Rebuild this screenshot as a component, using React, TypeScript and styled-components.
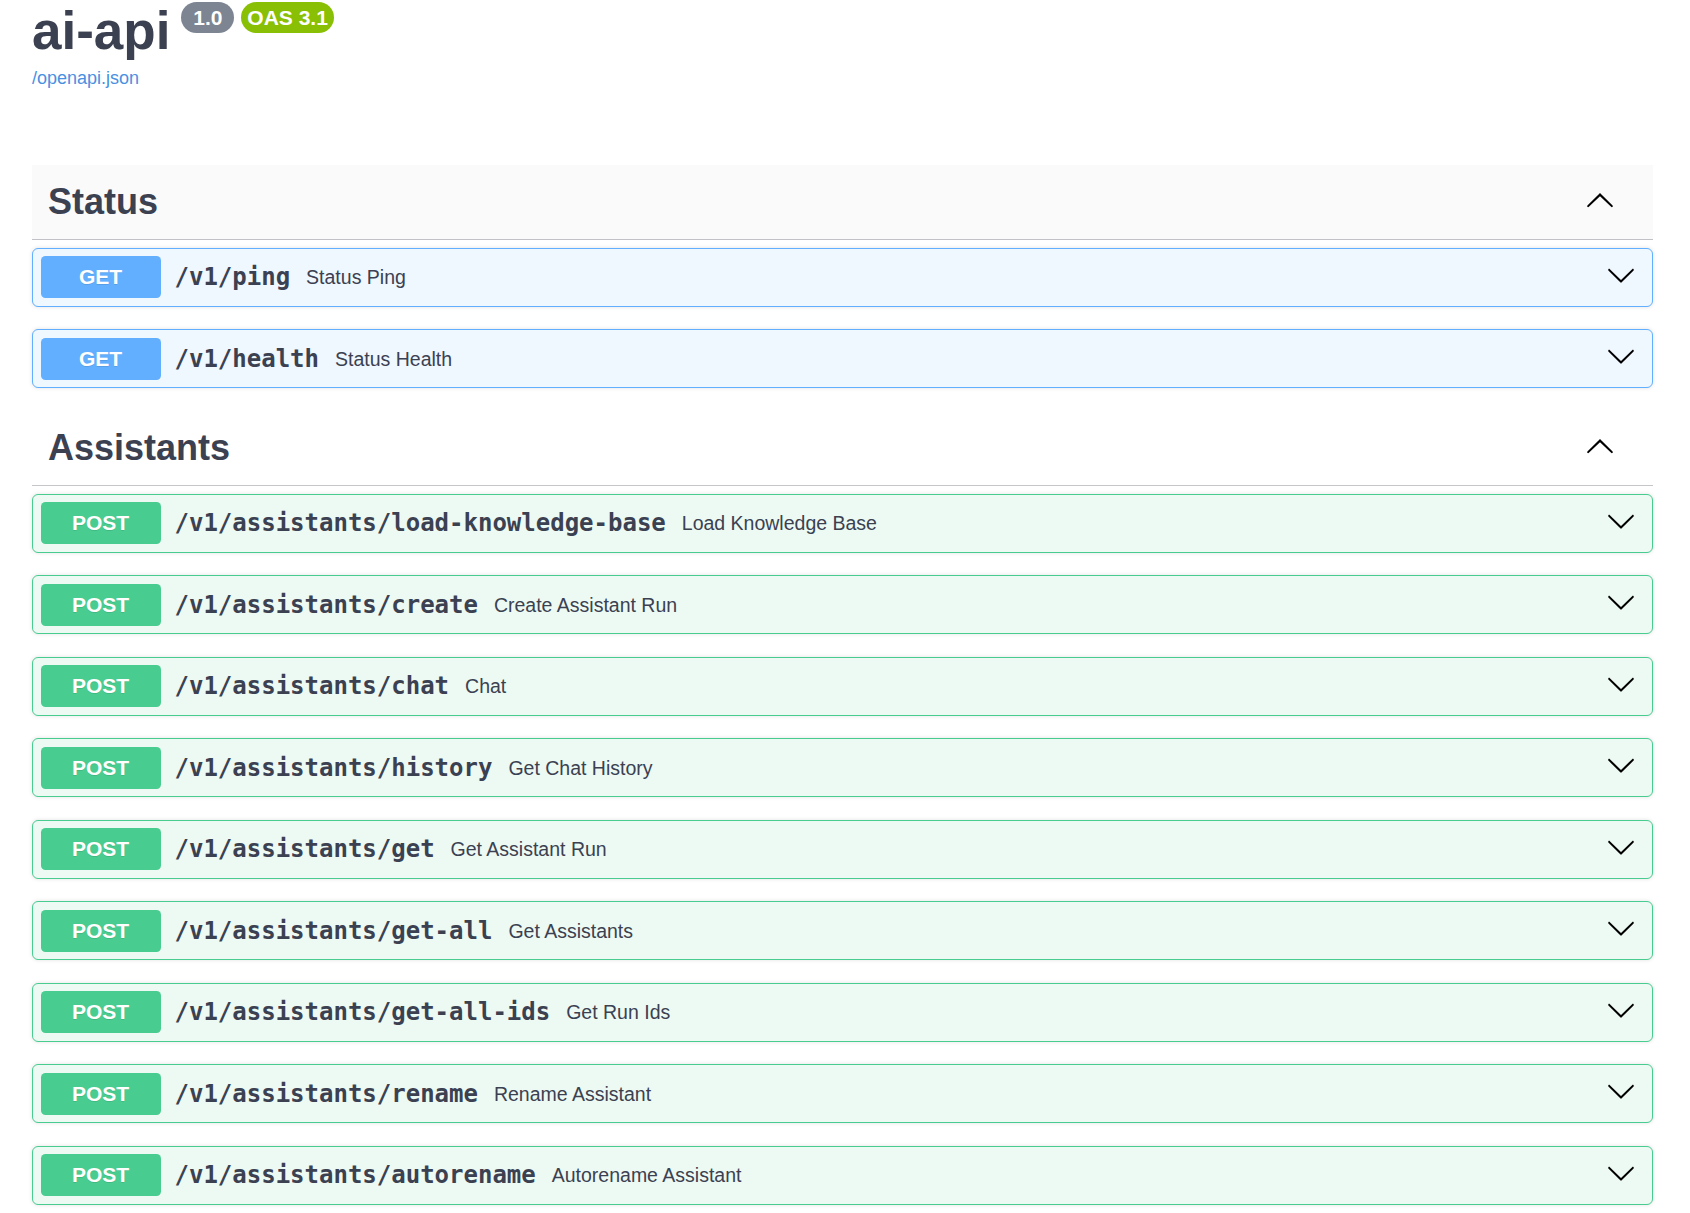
import React from "react";
import styled, { createGlobalStyle } from "styled-components";

const GlobalStyle = createGlobalStyle`
  html, body {
    margin: 0;
    padding: 0;
    background: #ffffff;
  }
  body {
    font-family: "Liberation Sans", Arial, sans-serif;
    color: #3b4151;
  }
`;

const Wrapper = styled.div`
  padding: 0 37px 24px 32px;
`;

const Info = styled.div`
  padding-top: 1px;
  margin-bottom: 76px;
`;

const TitleRow = styled.h2`
  margin: 0;
  font-size: 53px;
  font-weight: 700;
  color: #3b4151;
  font-family: "Liberation Sans", Arial, sans-serif;
  line-height: 1.15;
  display: flex;
  align-items: flex-start;
`;

const Version = styled.span<{ $first?: boolean; $bg: string }>`
  display: inline-block;
  margin-left: ${(p) => (p.$first ? "11px" : "7px")};
  margin-top: 1px;
  padding: 3px 6px;
  border-radius: 57px;
  background: ${(p) => p.$bg};
  color: #ffffff;
  font-size: 21px;
  font-weight: 700;
  line-height: 25px;
  white-space: pre;
  font-family: "Liberation Sans", Arial, sans-serif;
`;

const SpecLink = styled.a`
  display: inline-block;
  font-size: 18px;
  color: #4990e2;
  text-decoration: none;
  margin-top: 6px;
`;

const Section = styled.section`
  display: flex;
  flex-direction: column;
`;

const TagHeader = styled.h3<{ $hover?: boolean }>`
  box-sizing: border-box;
  height: 75px;
  margin: 0 0 8px;
  padding: 0 38px 0 16px;
  display: flex;
  align-items: center;
  justify-content: space-between;
  border-bottom: 1px solid rgba(59, 65, 81, 0.3);
  background: ${(p) => (p.$hover ? "#fafafa" : "transparent")};
  font-size: 36px;
  font-weight: 700;
  color: #3b4151;
  font-family: "Liberation Sans", Arial, sans-serif;
`;

const TagName = styled.span`
  padding-top: 1px;
`;

type Method = "GET" | "POST";

const palette: Record<Method, { bg: string; border: string }> = {
  GET: { bg: "#eff7ff", border: "#61affe" },
  POST: { bg: "#edfaf3", border: "#49cc90" },
};

const Op = styled.div<{ $m: Method }>`
  box-sizing: border-box;
  height: 59px;
  margin: 0 0 22.5px;
  padding: 0 16px 0 7.5px;
  display: flex;
  align-items: center;
  border: 1px solid ${(p) => palette[p.$m].border};
  background: ${(p) => palette[p.$m].bg};
  border-radius: 6px;
  box-shadow: 0 0 4px rgba(0, 0, 0, 0.12);
`;

const MethodBadge = styled.span<{ $m: Method }>`
  box-sizing: border-box;
  flex: none;
  width: 120px;
  height: 42px;
  display: flex;
  align-items: center;
  justify-content: center;
  border-radius: 4.5px;
  background: ${(p) => palette[p.$m].border};
  color: #ffffff;
  font-size: 21px;
  font-weight: 700;
  text-shadow: 0 1px 0 rgba(0, 0, 0, 0.1);
  font-family: "Liberation Sans", Arial, sans-serif;
`;

const Path = styled.span`
  padding: 0 16px 0 14px;
  font-family: "DejaVu Sans Mono", "Liberation Mono", monospace;
  font-weight: 700;
  font-size: 24px;
  color: #3b4151;
`;

const Desc = styled.span`
  flex: 1 1 auto;
  font-size: 19.5px;
  color: #3b4151;
  padding-top: 1px;
`;

const ArrowSvg = styled.svg<{ $up?: boolean }>`
  flex: none;
  width: 30px;
  height: 30px;
  margin-bottom: ${(p) => (p.$up ? "2px" : "5px")};
  transform: ${(p) => (p.$up ? "rotate(180deg)" : "none")};
`;

const Chevron = ({ up }: { up?: boolean }) => (
  <ArrowSvg $up={up} viewBox="0 0 20 20" aria-hidden="true">
    <path
      fill="#000"
      d="M17.418 6.109c.272-.268.709-.268.979 0s.271.701 0 .969l-7.908 7.83c-.27.268-.707.268-.979 0l-7.908-7.83c-.27-.268-.27-.701 0-.969.271-.268.709-.268.979 0L10 13.25l7.418-7.141z"
    />
  </ArrowSvg>
);

type Endpoint = { method: Method; path: string; summary: string };

const sections: { name: string; hover?: boolean; ops: Endpoint[] }[] = [
  {
    name: "Status",
    hover: true,
    ops: [
      { method: "GET", path: "/v1/ping", summary: "Status Ping" },
      { method: "GET", path: "/v1/health", summary: "Status Health" },
    ],
  },
  {
    name: "Assistants",
    ops: [
      { method: "POST", path: "/v1/assistants/load-knowledge-base", summary: "Load Knowledge Base" },
      { method: "POST", path: "/v1/assistants/create", summary: "Create Assistant Run" },
      { method: "POST", path: "/v1/assistants/chat", summary: "Chat" },
      { method: "POST", path: "/v1/assistants/history", summary: "Get Chat History" },
      { method: "POST", path: "/v1/assistants/get", summary: "Get Assistant Run" },
      { method: "POST", path: "/v1/assistants/get-all", summary: "Get Assistants" },
      { method: "POST", path: "/v1/assistants/get-all-ids", summary: "Get Run Ids" },
      { method: "POST", path: "/v1/assistants/rename", summary: "Rename Assistant" },
      { method: "POST", path: "/v1/assistants/autorename", summary: "Autorename Assistant" },
    ],
  },
];

export default function App() {
  return (
    <>
      <GlobalStyle />
      <Wrapper>
        <Info>
          <TitleRow>
            ai-api
            <Version $first $bg="#7d8492">{" 1.0 "}</Version>
            <Version $bg="#89bf04">OAS 3.1</Version>
          </TitleRow>
          <SpecLink href="#">/openapi.json</SpecLink>
        </Info>
        {sections.map((s) => (
          <Section key={s.name}>
            <TagHeader $hover={s.hover}>
              <TagName>{s.name}</TagName>
              <Chevron up />
            </TagHeader>
            {s.ops.map((op) => (
              <Op key={op.path} $m={op.method}>
                <MethodBadge $m={op.method}>{op.method}</MethodBadge>
                <Path>{op.path}</Path>
                <Desc>{op.summary}</Desc>
                <Chevron />
              </Op>
            ))}
          </Section>
        ))}
      </Wrapper>
    </>
  );
}
